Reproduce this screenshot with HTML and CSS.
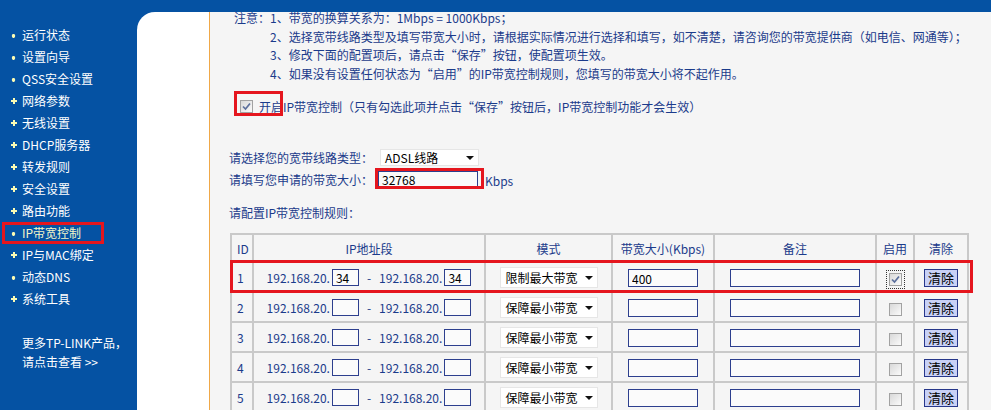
FILE: index.html
```html
<!DOCTYPE html>
<html lang="zh-CN">
<head>
<meta charset="utf-8">
<title>IP带宽控制</title>
<link rel="stylesheet" href="styles.css">
</head>
<body>
<div class="topbar"></div>
<div class="layout">
  <nav class="sidebar">
    <ul class="menu">
      <li><span class="bullet dot"></span>运行状态</li>
      <li><span class="bullet dot"></span>设置向导</li>
      <li><span class="bullet dot"></span>QSS安全设置</li>
      <li><span class="bullet plus"></span>网络参数</li>
      <li><span class="bullet plus"></span>无线设置</li>
      <li><span class="bullet plus"></span>DHCP服务器</li>
      <li><span class="bullet plus"></span>转发规则</li>
      <li><span class="bullet plus"></span>安全设置</li>
      <li><span class="bullet plus"></span>路由功能</li>
      <li class="active"><span class="bullet dot"></span>IP带宽控制<span class="mark"></span></li>
      <li><span class="bullet plus"></span>IP与MAC绑定</li>
      <li><span class="bullet dot"></span>动态DNS</li>
      <li><span class="bullet plus"></span>系统工具</li>
    </ul>
    <p class="more">更多TP-LINK产品，<br>请点击查看 &gt;&gt;</p>
  </nav>
  <div class="gutter"></div>
  <main class="content">
    <div class="notes">
      <span class="notes-label">注意：</span>
      <ul class="notes-list">
        <li>1、带宽的换算关系为：1Mbps = 1000Kbps；</li>
        <li>2、选择宽带线路类型及填写带宽大小时，请根据实际情况进行选择和填写，如不清楚，请咨询您的带宽提供商（如电信、网通等）；</li>
        <li>3、修改下面的配置项后，请点击“保存”按钮，使配置项生效。</li>
        <li>4、如果没有设置任何状态为“启用”的IP带宽控制规则，您填写的带宽大小将不起作用。</li>
      </ul>
    </div>

    <div class="enable">
      <span class="cb checked"><svg viewBox="0 0 11 11" width="11" height="11"><path d="M2 5.5 L4.5 8 L9 2.5" fill="none" stroke="#5c6f9c" stroke-width="1.7"/></svg></span>
      <span class="enable-text">开启IP带宽控制（只有勾选此项并点击“保存”按钮后，IP带宽控制功能才会生效）</span>
      <span class="enable-mark"></span>
    </div>

    <div class="form">
      <div class="form-row">
        <span class="form-label">请选择您的宽带线路类型：</span>
        <span class="sel sel-top"><span>ADSL线路</span><span class="arrow"></span></span>
      </div>
      <div class="form-row">
        <span class="form-label">请填写您申请的带宽大小：</span>
        <span class="boxed"><input class="in in-bw-total" type="text" value="32768" readonly><span class="box-mark"></span></span>
        <span class="unit">Kbps</span>
      </div>
    </div>

    <div class="rules-title">请配置IP带宽控制规则：</div>

    <div class="table-wrap">
      <table class="rules">
        <colgroup>
          <col style="width:22px"><col style="width:232px"><col style="width:127px"><col style="width:102px"><col style="width:162px"><col style="width:38px"><col style="width:54px">
        </colgroup>
        <thead>
          <tr><th class="id">ID</th><th>IP地址段</th><th>模式</th><th>带宽大小(Kbps)</th><th>备注</th><th>启用</th><th>清除</th></tr>
        </thead>
        <tbody>
          <tr>
            <td class="id">1</td>
            <td><span class="ip"><span class="ip-txt">192.168.20.</span><input class="in in-ip" type="text" value="34" readonly><span class="dash">-</span><span class="ip-txt">192.168.20.</span><input class="in in-ip" type="text" value="34" readonly></span></td>
            <td><span class="sel"><span>限制最大带宽</span><span class="arrow"></span></span></td>
            <td><input class="in in-bw" type="text" value="400" readonly></td>
            <td><input class="in in-note" type="text" value="" readonly></td>
            <td><span class="cb checked focus"><svg viewBox="0 0 11 11" width="11" height="11"><path d="M2 5.5 L4.5 8 L9 2.5" fill="none" stroke="#5c6f9c" stroke-width="1.7"/></svg></span></td>
            <td><button class="btn" type="button">清除</button></td>
          </tr>
          <tr>
            <td class="id">2</td>
            <td><span class="ip"><span class="ip-txt">192.168.20.</span><input class="in in-ip" type="text" value="" readonly><span class="dash">-</span><span class="ip-txt">192.168.20.</span><input class="in in-ip" type="text" value="" readonly></span></td>
            <td><span class="sel"><span>保障最小带宽</span><span class="arrow"></span></span></td>
            <td><input class="in in-bw" type="text" value="" readonly></td>
            <td><input class="in in-note" type="text" value="" readonly></td>
            <td><span class="cb"></span></td>
            <td><button class="btn" type="button">清除</button></td>
          </tr>
          <tr>
            <td class="id">3</td>
            <td><span class="ip"><span class="ip-txt">192.168.20.</span><input class="in in-ip" type="text" value="" readonly><span class="dash">-</span><span class="ip-txt">192.168.20.</span><input class="in in-ip" type="text" value="" readonly></span></td>
            <td><span class="sel"><span>保障最小带宽</span><span class="arrow"></span></span></td>
            <td><input class="in in-bw" type="text" value="" readonly></td>
            <td><input class="in in-note" type="text" value="" readonly></td>
            <td><span class="cb"></span></td>
            <td><button class="btn" type="button">清除</button></td>
          </tr>
          <tr>
            <td class="id">4</td>
            <td><span class="ip"><span class="ip-txt">192.168.20.</span><input class="in in-ip" type="text" value="" readonly><span class="dash">-</span><span class="ip-txt">192.168.20.</span><input class="in in-ip" type="text" value="" readonly></span></td>
            <td><span class="sel"><span>保障最小带宽</span><span class="arrow"></span></span></td>
            <td><input class="in in-bw" type="text" value="" readonly></td>
            <td><input class="in in-note" type="text" value="" readonly></td>
            <td><span class="cb"></span></td>
            <td><button class="btn" type="button">清除</button></td>
          </tr>
          <tr>
            <td class="id">5</td>
            <td><span class="ip"><span class="ip-txt">192.168.20.</span><input class="in in-ip" type="text" value="" readonly><span class="dash">-</span><span class="ip-txt">192.168.20.</span><input class="in in-ip" type="text" value="" readonly></span></td>
            <td><span class="sel"><span>保障最小带宽</span><span class="arrow"></span></span></td>
            <td><input class="in in-bw" type="text" value="" readonly></td>
            <td><input class="in in-note" type="text" value="" readonly></td>
            <td><span class="cb"></span></td>
            <td><button class="btn" type="button">清除</button></td>
          </tr>
        </tbody>
      </table>
      <span class="row-mark"></span>
    </div>
  </main>
</div>
</body>
</html>
```
FILE: styles.css
```css
* { box-sizing: border-box; }
html, body { margin: 0; height: 100%; overflow: hidden; }
body {
  font-family: "Noto Sans CJK SC", "Noto Sans", sans-serif;
  font-size: 12px;
  background: #0552a3;
}
.topbar { height: 12px; background: #0552a3; }
.layout { display: flex; height: calc(100% - 12px); background: #0552a3; }

/* sidebar */
.sidebar { width: 137px; flex: none; color: #ffffff; padding-top: 12px; }
.menu { list-style: none; margin: 0; padding: 0; }
.menu li {
  position: relative;
  display: flex;
  align-items: center;
  height: 22px;
  line-height: 22px;
  padding-left: 9px;
  white-space: nowrap;
}
.menu li.active { color: #f4f6c8; }
.bullet { flex: none; width: 9px; height: 9px; margin-right: 4px; }
.bullet.dot { background: radial-gradient(circle at 50% 55%, #fbfbb4 1.6px, transparent 2.1px); }
.bullet.plus {
  background:
    linear-gradient(#fbfbb4, #fbfbb4) center / 6px 2px no-repeat,
    linear-gradient(#fbfbb4, #fbfbb4) center / 2px 6px no-repeat;
}
.mark {
  position: absolute;
  left: 2px;
  top: 0;
  width: 102px;
  height: 22px;
  border: 3px solid #e5161e;
}
.more { margin: 23px 0 0 22px; line-height: 19px; white-space: nowrap; }

/* white gutter */
.gutter { width: 72px; flex: none; background: #ffffff; border-top-left-radius: 18px; }

/* content */
.content {
  flex: 1;
  min-width: 0;
  background: #f5f5f5;
  border-left: 1px solid #f0a848;
  color: #1b3b8b;
}
.notes { display: flex; margin: -3px 0 0 24px; line-height: 18.6px; white-space: nowrap; }
.notes-label { flex: none; }
.notes-list { list-style: none; margin: 0; padding: 0; }

.enable {
  position: relative;
  display: flex;
  align-items: center;
  height: 20px;
  margin: 13px 0 0 30px;
  white-space: nowrap;
}
.enable-text { margin-left: 6px; }
.enable-mark {
  position: absolute;
  left: -6px;
  top: -5px;
  width: 49px;
  height: 25px;
  border: 3px solid #e5161e;
}

.cb {
  display: inline-flex;
  align-items: center;
  justify-content: center;
  width: 13px;
  height: 13px;
  border: 1px solid #a2a2a2;
  background: linear-gradient(135deg, #d8d8d8, #fbfbfb);
  vertical-align: middle;
}
.cb.focus { outline: 1px dotted #333; outline-offset: 2px; }

.form { margin: 30px 0 0 19px; }
.form-row { display: flex; align-items: center; height: 22px; white-space: nowrap; }
.form-label { width: 149px; flex: none; }

.sel {
  display: inline-flex;
  align-items: center;
  justify-content: space-between;
  width: 98px;
  height: 21px;
  padding: 0 4px 0 5px;
  background: #ffffff;
  border: 1px solid #e6e6e6;
  color: #000;
  font-size: 12px;
  vertical-align: middle;
}
.sel-top { width: 99px; height: 17px; margin-left: 2px; padding: 0 4px 0 4px; }
.arrow {
  width: 0;
  height: 0;
  border-left: 4px solid transparent;
  border-right: 4px solid transparent;
  border-top: 4px solid #111;
  margin-top: 2px;
}

.in {
  font-family: inherit;
  font-size: 12px;
  color: #000;
  background: #fbfbfb;
  border: 1px solid #2d3f8e;
  border-radius: 0;
  padding: 0 3px;
  margin: 0;
  outline: none;
  vertical-align: middle;
}
.boxed { position: relative; display: inline-flex; }
.in-bw-total { width: 100px; height: 16px; background: #fafafa; }
.box-mark {
  position: absolute;
  left: -3px;
  right: -6px;
  top: -3px;
  bottom: -2px;
  border: 3px solid #e5161e;
}
.unit { margin: 3px 0 0 7px; }

.rules-title { margin: 13px 0 0 19px; line-height: 20px; }

.table-wrap { position: relative; margin: 10px 0 0 20px; width: 737px; }
.rules {
  border-collapse: collapse;
  table-layout: fixed;
  width: 737px;
  color: #1b3b8b;
}
.rules th, .rules td {
  border: 2px solid #c9c9c9;
  text-align: center;
  vertical-align: middle;
  padding: 0;
  white-space: nowrap;
  font-weight: normal;
}
.rules th { height: 28px; }
.rules td { height: 30px; }
.rules .id { text-align: left; padding-left: 5px; }

.ip { display: inline-flex; align-items: center; }
.ip-txt { letter-spacing: 0; }
.in-ip { width: 27px; height: 17px; margin-left: 2px; }
.dash { margin: 0 8px; }
.in-bw { width: 70px; height: 18px; }
.in-note { width: 130px; height: 18px; }

.btn {
  width: 34px;
  height: 18px;
  padding: 0;
  font-family: inherit;
  font-size: 13px;
  line-height: 16px;
  color: #000;
  background: #c9d1f5;
  border: 1px solid #27378a;
  border-radius: 0;
  vertical-align: middle;
}

.row-mark {
  position: absolute;
  left: 0;
  top: 27px;
  width: 743px;
  height: 33px;
  border: 3px solid #e5161e;
}
```
